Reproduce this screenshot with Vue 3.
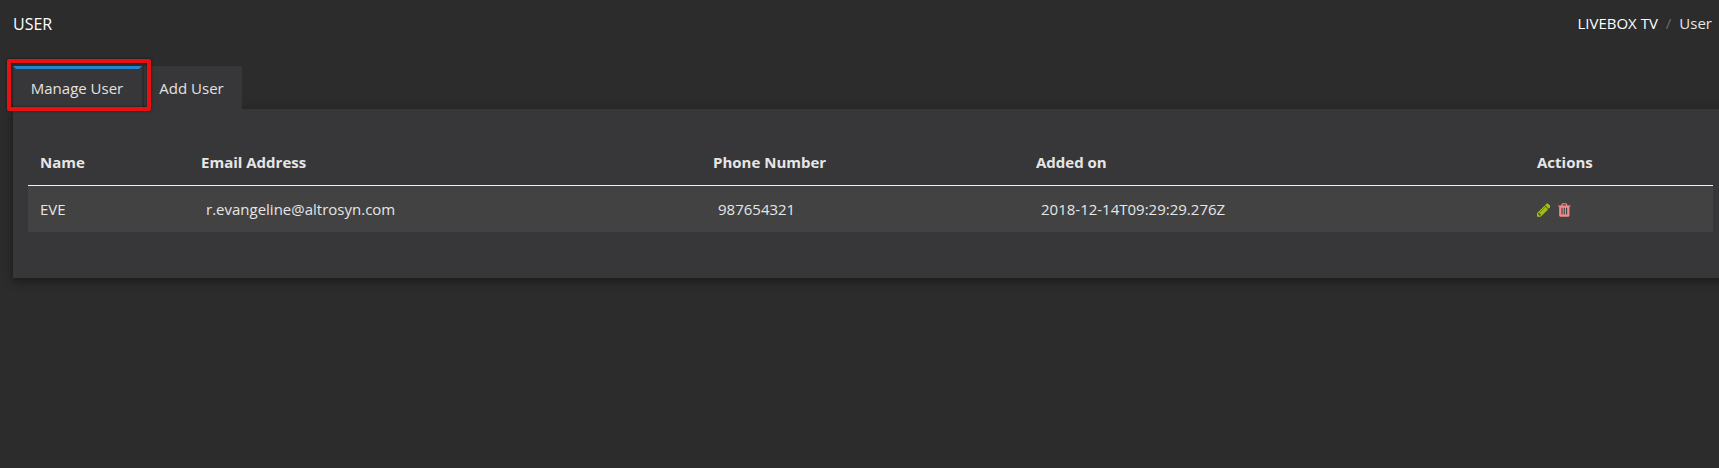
<template>
  <div class="page">
    <header class="page-header">
      <h1>USER</h1>
      <div class="breadcrumb">
        <a>LIVEBOX TV</a>
        <span class="separator">/</span>
        <span>User</span>
      </div>
    </header>

    <nav class="tabs">
      <button
        v-for="tab in tabs"
        :key="tab"
        class="tab"
        :class="{ active: tab === activeTab }"
        @click="activeTab = tab"
      >
        {{ tab }}
      </button>
      <div class="highlight"></div>
    </nav>

    <section class="panel">
      <table>
        <thead>
          <tr>
            <th class="col-name">Name</th>
            <th class="col-email">Email Address</th>
            <th class="col-phone">Phone Number</th>
            <th class="col-added">Added on</th>
            <th>Actions</th>
          </tr>
        </thead>
        <tbody>
          <tr v-for="user in users" :key="user.email">
            <td>{{ user.name }}</td>
            <td class="indent">{{ user.email }}</td>
            <td class="indent">{{ user.phone }}</td>
            <td class="indent">{{ user.addedOn }}</td>
            <td>
              <div class="actions">
                <svg class="edit" viewBox="128 0 1536 1792">
                  <path d="M491 1536l91-91-235-235-91 91v107h128v128h107zm523-928q0-22-22-22-10 0-17 7l-542 542q-7 7-7 17 0 22 22 22 10 0 17-7l542-542q7-7 7-17zm-54-192l416 416-832 832h-416v-416zm683 96q0 53-37 90l-166 166-416-416 166-165q36-38 90-38 53 0 91 38l235 234q37 39 37 91z" />
                </svg>
                <svg class="delete" viewBox="192 0 1408 1792">
                  <path d="M704 1376v-704q0-14-9-23t-23-9h-64q-14 0-23 9t-9 23v704q0 14 9 23t23 9h64q14 0 23-9t9-23zm256 0v-704q0-14-9-23t-23-9h-64q-14 0-23 9t-9 23v704q0 14 9 23t23 9h64q14 0 23-9t9-23zm256 0v-704q0-14-9-23t-23-9h-64q-14 0-23 9t-9 23v704q0 14 9 23t23 9h64q14 0 23-9t9-23zm-544-992h448l-48-117q-7-9-17-11h-317q-10 2-17 11zm928 32v64q0 14-9 23t-23 9h-96v948q0 83-47 143.5t-113 60.5h-832q-66 0-113-58.5t-47-141.5v-952h-96q-14 0-23-9t-9-23v-64q0-14 9-23t23-9h309l70-167q15-37 54-63t79-26h320q40 0 79 26t54 63l70 167h309q14 0 23 9t9 23z" />
                </svg>
              </div>
            </td>
          </tr>
        </tbody>
      </table>
    </section>
  </div>
</template>

<script setup>
import { ref } from "vue";

const tabs = ["Manage User", "Add User"];
const activeTab = ref("Manage User");

const users = ref([
  {
    name: "EVE",
    email: "r.evangeline@altrosyn.com",
    phone: "987654321",
    addedOn: "2018-12-14T09:29:29.276Z"
  }
]);
</script>

<style>
body {
  margin: 0;
  background: #2c2c2c;
}
</style>

<style scoped>
.page {
  box-sizing: border-box;
  height: 468px;
  padding-left: 13px;
  overflow: hidden;
  background: #2c2c2c;
  color: #e6e6e6;
  font-family: "Open Sans", sans-serif;
  font-size: 15px;
  line-height: 20px;
}
.page-header {
  display: flex;
  justify-content: space-between;
  height: 66px;
  padding: 13px 7px 0 0;
  box-sizing: border-box;
}
h1 {
  margin: 0;
  padding-top: 1px;
  color: #fff;
  font-size: 16px;
  font-weight: 400;
  line-height: 20px;
}
.breadcrumb {
  display: flex;
}
.breadcrumb a {
  color: #fff;
}
.separator {
  margin: 0 8px;
  color: #6c6c6c;
}
.tabs {
  position: relative;
  display: flex;
  gap: 2px;
  height: 43px;
}
.tab {
  box-sizing: border-box;
  padding: 0 15px 3px;
  border: 3px solid #373739;
  border-bottom: none;
  background: #373739;
  color: #e2e2e2;
  font: inherit;
  cursor: pointer;
}
.tab.active {
  width: 129px;
  padding: 0 15px 3px 14px;
  border-top-color: #2185d0;
  white-space: nowrap;
}
.tab:not(.active) {
  width: 98px;
  padding: 0 3px 3px 0;
}
/* red frame around the selected tab */
.highlight {
  position: absolute;
  top: -7px;
  left: -6px;
  box-sizing: border-box;
  width: 144px;
  height: 52px;
  border: 4px solid #e81010;
  border-radius: 2px;
  box-shadow: 0 0 3px rgba(0, 0, 0, 0.5), inset 0 0 3px rgba(0, 0, 0, 0.5);
  pointer-events: none;
}
.panel {
  box-sizing: border-box;
  height: 169px;
  margin-right: -10px;
  padding: 31px 16px 0 15px;
  background: #373739;
  box-shadow: 0 3px 10px rgba(0, 0, 0, 0.45);
}
table {
  width: 1685px;
  table-layout: fixed;
  border-collapse: separate;
  border-spacing: 0;
}
th,
td {
  box-sizing: border-box;
  padding: 0 12px;
  text-align: left;
}
th {
  height: 46px;
  padding-bottom: 2px;
  border-bottom: 1px solid #f0f0f0;
  font-weight: 700;
}
td {
  height: 46px;
  background: #424242;
}
td.indent {
  padding-left: 17px;
}
.col-name {
  width: 161px;
}
.col-email {
  width: 512px;
}
.col-phone {
  width: 323px;
}
.col-added {
  width: 501px;
}
.actions {
  display: flex;
  gap: 8px;
  padding-top: 1px;
  margin-left: -0.5px;
}
.actions svg {
  height: 16px;
  cursor: pointer;
}
.edit {
  width: 13.7px;
  fill: #a3bd16;
}
.delete {
  width: 12.6px;
  fill: #f48b8b;
}
</style>
